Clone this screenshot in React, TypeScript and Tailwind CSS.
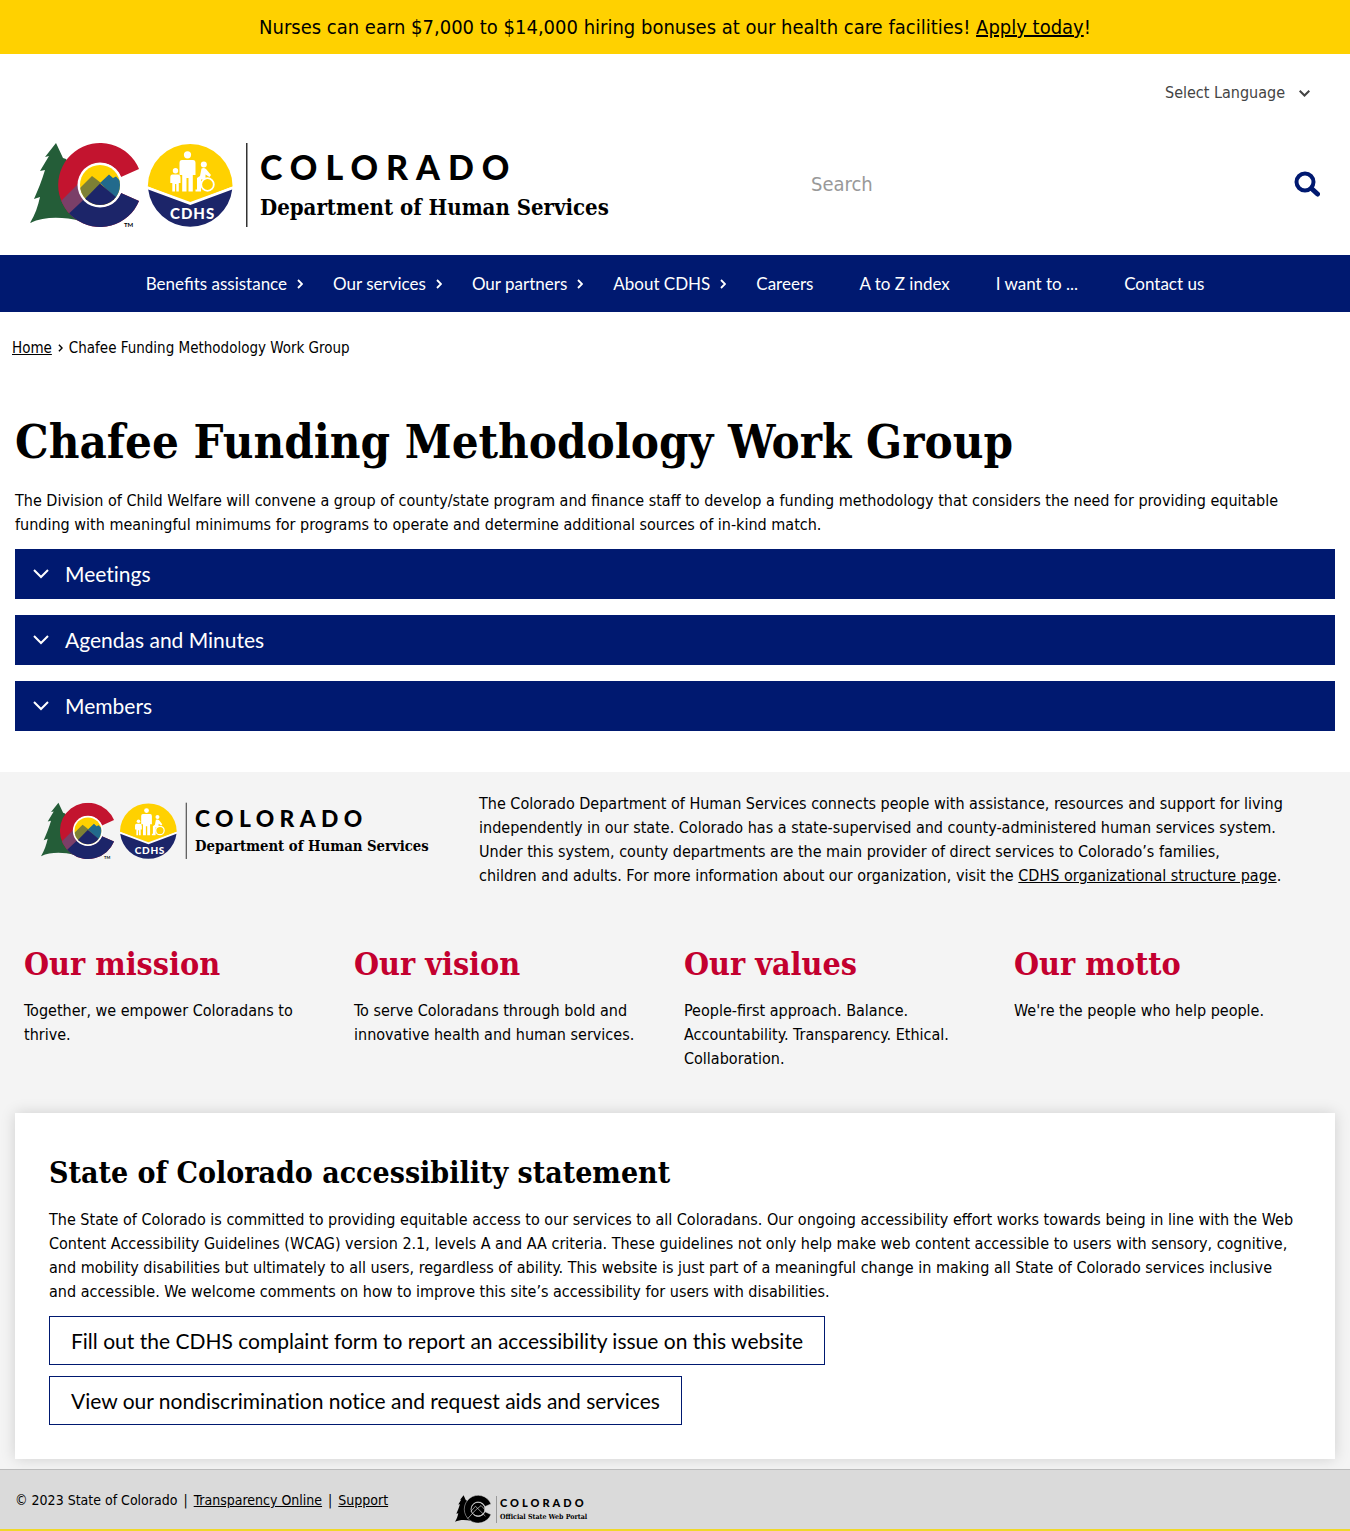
import type { ReactNode } from "react";

const body = "font-['DejaVu_Sans_Condensed','DejaVu_Sans',sans-serif]";
const slab = "font-['DejaVu_Serif_Condensed','DejaVu_Serif',serif]";
const sans = "font-['Lato',sans-serif]";

const navItems = [
  { label: "Benefits assistance", menu: true },
  { label: "Our services", menu: true },
  { label: "Our partners", menu: true },
  { label: "About CDHS", menu: true },
  { label: "Careers", menu: false },
  { label: "A to Z index", menu: false },
  { label: "I want to ...", menu: false },
  { label: "Contact us", menu: false },
];

const sections = ["Meetings", "Agendas and Minutes", "Members"];

const pillars = [
  { title: "Our mission", text: "Together, we empower Coloradans to thrive." },
  { title: "Our vision", text: "To serve Coloradans through bold and innovative health and human services." },
  { title: "Our values", text: "People-first approach. Balance. Accountability. Transparency. Ethical. Collaboration." },
  { title: "Our motto", text: "We're the people who help people." },
];

const TREE =
  "M26 1 L15 15 L19 14 L10 29 L15 28 C12 38 8 48 4 57 L10 55 C8 64 5 73 0 81 C15 74 34 75 50 79 L62 50 L36 17 L33 16 Z";
const LETTER_C = "M109 27 A42 42 0 1 0 109 59 L91 51 A22 22 0 1 1 91 35 Z";

function CdhsLogo({ className }: { className: string }) {
  return (
    <svg viewBox="0 0 582 88" className={className} role="img" aria-label="Colorado Department of Human Services">
      <clipPath id="letter-c">
        <path d={LETTER_C} />
      </clipPath>
      <clipPath id="sun">
        <circle cx="70" cy="43" r="20" />
      </clipPath>
      <path d={TREE} fill="#245d38" />
      <g clipPath="url(#letter-c)">
        <rect x="26" y="0" width="88" height="88" fill="#c3142f" />
        <path d="M24 66 L50 40 L62 48 L62 76 L36 82 Z" fill="#7b3f68" />
        <path d="M30 80 L66 46 L84 46 L114 60 V90 H30 Z" fill="#1c2569" />
      </g>
      <circle cx="70" cy="43" r="22.500" fill="#fff" />
      <g clipPath="url(#sun)">
        <rect x="48" y="22" width="44" height="44" fill="#ffd100" />
        <path d="M44 52 L62 34 L66 37 L71 41 L50 68 Z" fill="#7d8035" />
        <path d="M70 41 L79 32.500 L83 36 L86 34.500 L96 45 L92 62 Z" fill="#226a8c" />
        <path d="M46 66 L70 41.500 L94 62 L94 70 L46 70 Z" fill="#1c2569" />
      </g>
      <text x="94" y="85" fontSize="6" fontFamily="Lato, sans-serif" fontWeight="700">TM</text>

      <path d="M117.800 44.500 A42.300 42.300 0 1 1 202.600 44.500 L160.300 60 Z" fill="#ffd100" />
      <path d="M117.800 44.500 L160.300 61 L202.600 44.500 L202.200 48 L160.300 64 L118.200 48 Z" fill="#fff" />
      <path d="M118.200 47.500 L160.300 63 L202.200 47.500 A42.300 42.300 0 0 1 118.200 47.500 Z" fill="#1c2569" />
      <g fill="#fff">
        <circle cx="157.500" cy="12.800" r="3.600" />
        <path d="M152 18 H163 Q165.500 18 165.500 21 V33 H162.800 V49.500 H158.500 V36 H156.500 V49.500 H152.200 V33 H149.500 V21 Q149.500 18 152 18 Z" />
        <circle cx="145.500" cy="28.800" r="2.700" />
        <path d="M142.500 32.500 H148 Q150.500 32.500 150.500 36 V41 H148.800 V49.500 H146.300 V42 H145 V49.500 H142.300 V41 H140.300 V35.500 Q140.300 32.500 142.500 32.500 Z" />
        <circle cx="173.800" cy="22.500" r="3" />
        <path d="M171.500 26.500 Q174 25.500 176 27 L181 33 L179.500 35 L175.500 32.500 V37.500 H171 V49.500 H165.500 V47.500 H167 V36 L170 34 Z" />
      </g>
      <circle cx="177.500" cy="42.500" r="6.300" fill="none" stroke="#fff" strokeWidth="1.800" />
      <text x="140" y="77" fontSize="15" fontFamily="Lato, sans-serif" fontWeight="900" fill="#fff" letterSpacing="1">
        CDHS
      </text>

      <rect x="216" y="1" width="1.500" height="84" fill="#333" />
      <text x="230" y="38" fontSize="34" fontFamily="Lato, sans-serif" fontWeight="900" letterSpacing="8">
        COLORADO
      </text>
      <text x="230" y="73" fontSize="22" fontFamily="'DejaVu Serif Condensed', 'DejaVu Serif', serif" fontWeight="700">
        Department of Human Services
      </text>
    </svg>
  );
}

function PortalLogo() {
  return (
    <svg viewBox="0 0 136 30" className="h-[30px] w-[136px]" role="img" aria-label="Colorado Official State Web Portal">
      <g transform="scale(0.330)">
        <path d={TREE} />
        <path d={LETTER_C} stroke="#dadada" strokeWidth="1.500" />
        <circle cx="70" cy="43" r="20" />
        <g fill="none" stroke="#dadada" strokeWidth="2">
          <circle cx="70" cy="43" r="21" />
          <path d="M38 72 L62 46 L79 32 L96 50" />
          <path d="M48 50 L62 34 L92 64" />
        </g>
      </g>
      <rect x="41" y="1" width="1" height="27" fill="#999" />
      <text x="45" y="12" fontSize="11" fontFamily="Lato, sans-serif" fontWeight="900" letterSpacing="3">
        COLORADO
      </text>
      <text x="45" y="24" fontSize="7" fontFamily="'DejaVu Serif Condensed', 'DejaVu Serif', serif" fontWeight="700">
        Official State Web Portal
      </text>
    </svg>
  );
}

function Chevron({ className, width = 2 }: { className: string; width?: number }) {
  return (
    <svg viewBox="0 0 16 10" className={className} fill="none" stroke="currentColor" strokeWidth={width} aria-hidden="true">
      <path d="M1 1 L8 8 L15 1" />
    </svg>
  );
}

function CaretRight({ className }: { className: string }) {
  return (
    <svg viewBox="0 0 6 10" className={className} fill="none" stroke="currentColor" strokeWidth="1.800" aria-hidden="true">
      <path d="M1 1 L5 5 L1 9" />
    </svg>
  );
}

function OutlineLink({ children }: { children: ReactNode }) {
  return (
    <a
      href="#"
      className={`${sans} w-fit border border-[#001970] bg-white px-[21px] py-[9px] text-[21px] leading-[29px] text-black [font-variant-ligatures:none]`}
    >
      {children}
    </a>
  );
}

export default function App() {
  return (
    <div className={`${body} bg-white text-base leading-6 text-black`}>
      <div className="bg-[#ffd100] py-3 text-center text-xl leading-[30px]">
        Nurses can earn $7,000 to $14,000 hiring bonuses at our health care facilities!{" "}
        <a href="#" className="underline">Apply today</a>!
      </div>

      <header>
        <div className="flex justify-end px-10 pt-[27px]">
          <div className="relative flex items-center text-[#444]">
            <select aria-label="Language" className="appearance-none bg-transparent pr-6 leading-6" defaultValue="">
              <option value="">Select Language</option>
            </select>
            <Chevron className="pointer-events-none absolute right-0 h-[7px] w-[11px]" width={3} />
          </div>
        </div>
        <div className="flex items-center justify-between px-[30px] pt-[37px] pb-[25px]">
          <a href="#" className="block">
            <CdhsLogo className="h-[88px] w-[582px]" />
          </a>
          <form className="flex w-[509px] items-center justify-between pb-1" onSubmit={(e) => e.preventDefault()}>
            <input
              type="search"
              aria-label="Search"
              placeholder="Search"
              className="min-w-0 flex-1 bg-transparent text-xl outline-none placeholder:text-[#999]"
            />
            <button type="submit" aria-label="Submit search" className="text-[#001970]">
              <svg viewBox="0 0 26 26" className="size-[26px]" fill="none" stroke="currentColor">
                <circle cx="11" cy="11" r="8.500" strokeWidth="4" />
                <path d="M17.500 17.500 L23.500 23" strokeWidth="5" strokeLinecap="round" />
              </svg>
            </button>
          </form>
        </div>
      </header>

      <nav className={`${sans} bg-[#001970] text-[17px] text-white`}>
        <ul className="flex justify-center gap-[46px] pt-[17px] pb-4">
          {navItems.map((item) => (
            <li key={item.label}>
              <a href="#" className="flex items-center whitespace-nowrap">
                {item.label}
                {item.menu && <CaretRight className="-mr-4 ml-2.5 h-2.5 w-1.5" />}
              </a>
            </li>
          ))}
        </ul>
      </nav>

      <nav aria-label="Breadcrumb" className="flex items-center gap-1.5 px-3 pt-6 text-[15px]">
        <a href="#" className="underline">Home</a>
        <CaretRight className="h-2 w-[5px]" />
        <span>Chafee Funding Methodology Work Group</span>
      </nav>

      <main className="px-[15px] pt-[52px] pb-[41px]">
        <h1 className={`${slab} text-[47px] leading-[60px] font-bold`}>Chafee Funding Methodology Work Group</h1>
        <p className="pt-[17px]">
          The Division of Child Welfare will convene a group of county/state program and finance staff to develop a
          funding methodology that considers the need for providing equitable funding with meaningful minimums for
          programs to operate and determine additional sources of in-kind match.
        </p>
        <div className="flex flex-col gap-4 pt-3">
          {sections.map((title) => (
            <button
              key={title}
              type="button"
              aria-expanded="false"
              className={`${sans} flex h-[50px] items-center gap-4 bg-[#001970] px-[18px] text-left text-[21px] text-white [font-variant-ligatures:none]`}
            >
              <Chevron className="h-2.5 w-4" />
              {title}
            </button>
          ))}
        </div>
      </main>

      <section className="bg-[#f4f4f4] px-[15px] pt-5 pb-2.5">
        <div className="flex">
          <div className="w-[464px] shrink-0 pt-2.5 pl-[26px]">
            <CdhsLogo className="h-[59px] w-[390px]" />
          </div>
          <p className="max-w-[826px]">
            The Colorado Department of Human Services connects people with assistance, resources and support for living
            independently in our state. Colorado has a state-supervised and county-administered human services system.
            Under this system, county departments are the main provider of direct services to Colorado’s families,
            <br />
            children and adults. For more information about our organization, visit the{" "}
            <a href="#" className="underline">CDHS organizational structure page</a>.
          </p>
        </div>

        <div className="grid grid-cols-4 pt-[56px]">
          {pillars.map((p) => (
            <div key={p.title} className="pr-9 pl-[9px]">
              <h2 className={`${slab} text-[32px] leading-[40px] font-bold text-[#c3002f]`}>{p.title}</h2>
              <p className="pt-[15px]">{p.text}</p>
            </div>
          ))}
        </div>

        <div className="mt-[42px] bg-white px-[34px] pt-10 pb-[34px] shadow-[0_0_14px_rgba(0,0,0,0.15)]">
          <h2 className={`${slab} text-[30px] leading-[40px] font-bold`}>State of Colorado accessibility statement</h2>
          <p className="pt-[15px]">
            The State of Colorado is committed to providing equitable access to our services to all Coloradans. Our
            ongoing accessibility effort works towards being in line with the Web Content Accessibility Guidelines
            (WCAG) version 2.1, levels A and AA criteria. These guidelines not only help make web content accessible to
            users with sensory, cognitive, and mobility disabilities but ultimately to all users, regardless of
            ability. This website is just part of a meaningful change in making all State of Colorado services
            inclusive and accessible. We welcome comments on how to improve this site’s accessibility for users with
            disabilities.
          </p>
          <div className="flex flex-col gap-[11px] pt-3">
            <OutlineLink>Fill out the CDHS complaint form to report an accessibility issue on this website</OutlineLink>
            <OutlineLink>View our nondiscrimination notice and request aids and services</OutlineLink>
          </div>
        </div>
      </section>

      <footer className="flex items-start border-t border-b-2 border-t-[#bbb] border-b-[#f0d828] bg-[#dadada] px-[15px] pt-[18px] pb-1 text-sm">
        <p className="flex w-[440px] gap-1.5 leading-6">
          <span>© 2023 State of Colorado</span>
          <span>|</span>
          <a href="#" className="underline">Transparency Online</a>
          <span>|</span>
          <a href="#" className="underline">Support</a>
        </p>
        <a href="#" className="pt-[7px]">
          <PortalLogo />
        </a>
      </footer>
    </div>
  );
}
